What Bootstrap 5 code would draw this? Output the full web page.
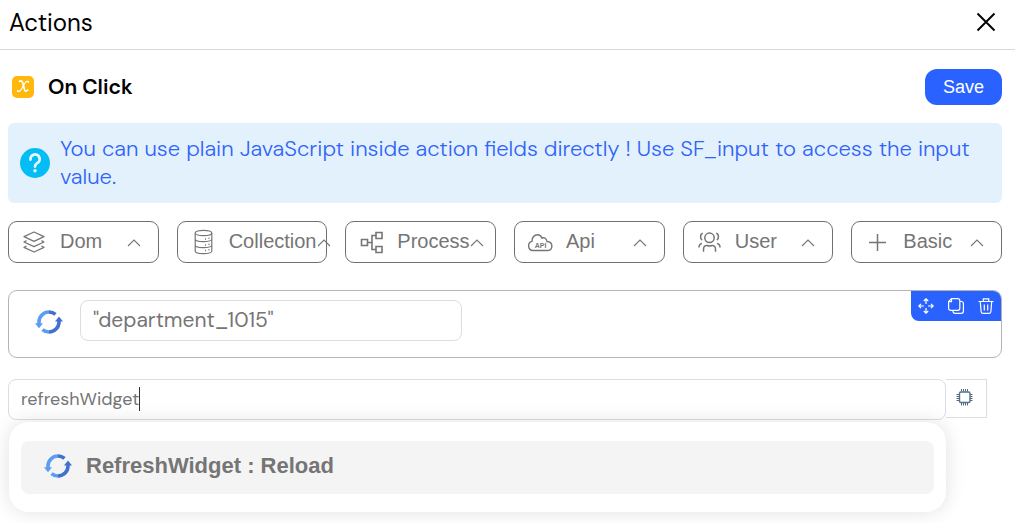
<!DOCTYPE html>
<html lang="en">
<head>
<meta charset="utf-8">
<meta name="viewport" content="width=device-width, initial-scale=1">
<title>Actions</title>
<link href="https://cdn.jsdelivr.net/npm/bootstrap@5.3.0/dist/css/bootstrap.min.css" rel="stylesheet">
<style>
  :root { --brand: #2962ff; --ink: #757575; --line: #dcdce6; }
  body { font-family: "DM Sans", Inter, "Liberation Sans", sans-serif; color: #000; background: #fff; }
  svg { display: block; flex: none; }
  .panel-head { height: 50px; padding: 0 16px 4px 9px; border-bottom: 1px solid #d9d9d9; }
  .panel-title { font-size: 24px; line-height: 28px; font-weight: 400; }
  .panel-main { padding: 19px 13px 0 8px; }
  .event-title { font-size: 21px; line-height: 28px; font-weight: 600; }
  .event-icon { margin: 0 14px 0 4px; }
  .btn-save { width: 77px; height: 36px; padding: 0; border: 0; border-radius: 12px; background: var(--brand); color: #fff; font: 18px/36px "Liberation Sans", sans-serif; }
  .tip { min-height: 80px; margin: 18px 0; padding: 12px; gap: 10px; border: 0; border-radius: 6px; background: #e3f1fd; color: #3064f8; font-size: 22px; font-weight: 300; line-height: 28px; }
  .picker-grid { gap: 18px; }
  .picker { flex: 1 1 0; min-width: 0; height: 42px; padding: 0 17px 0 13px; border: 1px solid #707070; border-radius: 9px; background: #fff; color: var(--ink); font: 20px/28px "Liberation Sans", sans-serif; text-align: left; }
  .picker-label { margin: 0 0 2px 14px; }
  .step { height: 68px; margin: 27px 0 21px; padding: 9px 26px; border: 1px solid #b4b4b4; border-radius: 9px; }
  .step-icon { margin: 10px 17px 0 0; }
  .field { height: 41px; padding: 0 12px 2px; border: 1px solid var(--line); border-radius: 8px; background: #fff; color: var(--ink); }
  .field:focus { color: var(--ink); box-shadow: none; border-color: var(--line); }
  .field-arg { width: 382px; font-size: 21px; }
  .field-search { font-size: 18px; }
  .step-tools { position: absolute; top: 0; right: 0; background: var(--brand); border-radius: 0 8px 0 8px; }
  .tool { width: 30px; height: 30px; padding: 7px; border: 0; background: none; color: #fff; }
  .caret { position: absolute; top: 8px; left: 131px; width: 1px; height: 24px; background: #333; }
  .search-row { padding-right: 15px; }
  .chip-btn { width: 41px; height: 39px; padding: 0 4px 2px 0; border: 1px solid var(--line); border-left: 0; background: #fff; }
  .suggest { margin: 2px 0 11px 1px; padding: 19px 12px 18px; border-radius: 20px; background: #fff; box-shadow: 0 0 20px rgba(0,0,0,.12); list-style: none; }
  .suggest-item { height: 53px; padding: 0 23px 4px; gap: 14px; border: 0; border-radius: 8px; background: #f4f4f4; color: var(--ink); font: bold 22px/28px "Liberation Sans", sans-serif; }
</style>
</head>
<body class="min-vh-100">
<svg width="0" height="0" class="position-absolute" aria-hidden="true">
  <symbol id="reload" viewBox="0 0 28 24">
    <g fill="none" stroke-width="3.600">
      <path d="M14 2A10 10 0 0 0 4 12v2" stroke="#5b9df0"/>
      <path d="M14 22a10 10 0 0 1-6.500-2.400" stroke="#5b9df0"/>
      <path d="M14 2a10 10 0 0 1 6.500 2.400M14 22a10 10 0 0 0 10-10v-2" stroke="#4270d0"/>
    </g>
    <path d="M0 13.200l8 0-4 5z" fill="#5b9df0"/><path d="M20 11.500h8l-4-5z" fill="#4270d0"/>
  </symbol>
  <symbol id="chevron" viewBox="0 0 14 24"><path d="M1 16 7 10l6 6" fill="none" stroke="#757575" stroke-width="1.100"/></symbol>
</svg>

<header class="panel-head d-flex align-items-center justify-content-between">
  <h1 class="panel-title m-0">Actions</h1>
  <button type="button" class="btn p-0 border-0" aria-label="Close">
    <svg width="26" height="26" viewBox="0 0 26 26" fill="none" stroke="#000" stroke-width="1.900"><path d="m4.500 3.500 17 17M21.500 3.500l-17 17"/></svg>
  </button>
</header>

<main class="panel-main">
  <div class="d-flex align-items-center justify-content-between">
    <div class="d-flex align-items-center">
      <svg class="event-icon" width="22" height="22" viewBox="0 0 22 22"><rect width="22" height="22" rx="5" fill="#ffb80b"/><path d="M7.500 5.300c2-.8 2.800-.2 3.300 1.700l1.700 6.500c.5 2 1.600 2.300 3.300.5" fill="none" stroke="#fff" stroke-width="1.700" stroke-linecap="round"/><path d="M16.300 5.600c-1.400-.9-2.500 0-3.900 2.400l-3.200 5.500c-1.200 2-2.300 2.500-3.500 1.800" fill="none" stroke="#fff" stroke-width="1.200" stroke-linecap="round"/><circle cx="16.300" cy="6" r=".9" fill="#fff"/><circle cx="5.800" cy="15" r=".9" fill="#fff"/></svg>
      <h2 class="event-title m-0">On Click</h2>
    </div>
    <button type="button" class="btn btn-save">Save</button>
  </div>

  <div class="alert tip d-flex align-items-center" role="note">
    <svg width="30" height="30" viewBox="0 0 30 30"><circle cx="15" cy="15" r="15" fill="#04bdf5"/><path d="M10.500 11.500a4.600 4.600 0 1 1 6.700 3.600C15.600 16 15 16.700 15 18.500" fill="none" stroke="#e8f7fe" stroke-width="2.800" stroke-linecap="round"/><circle cx="15" cy="22.700" r="1.700" fill="#e8f7fe"/></svg>
    <div>You can use plain JavaScript inside action fields directly ! Use SF_input to access the input value.</div>
  </div>

  <div class="picker-grid d-flex">
    <button type="button" class="picker d-flex align-items-center">
      <svg width="24" height="24" viewBox="0 0 24 24" fill="none" stroke="#757575" stroke-width="1.300" stroke-linejoin="round"><path d="m12 2 10 4.700-10 4.700L2 6.700zM4.500 10.700 2 12l10 4.700L22 12l-2.500-1.300M4.500 16 2 17.300 12 22l10-4.700-2.500-1.300"/></svg>
      <span class="picker-label">Dom</span><svg class="ms-auto" width="14" height="24"><use href="#chevron"/></svg>
    </button>
    <button type="button" class="picker d-flex align-items-center">
      <svg width="24" height="26" viewBox="0 0 24 26" fill="none" stroke="#757575" stroke-width="1.200"><ellipse cx="12.500" cy="4" rx="8.300" ry="2.600"/><path d="M4.200 4v18c0 3.600 16.600 3.600 16.600 0V4M4.200 10c0 3.600 16.600 3.600 16.600 0M4.200 16c0 3.600 16.600 3.600 16.600 0"/><path d="M14 10h1M17.500 9.200h1M14 16h1M17.500 15.200h1M14 21.600h1M17.500 20.800h1" stroke-width="1.500"/></svg>
      <span class="picker-label">Collection</span><svg class="ms-auto" width="14" height="24"><use href="#chevron"/></svg>
    </button>
    <button type="button" class="picker d-flex align-items-center">
      <svg width="24" height="24" viewBox="0 0 24 24" fill="none" stroke="#757575" stroke-width="1.600"><path d="M2.500 9.500h6v6h-6zM17 2.500h6v6h-6zM17 16.500h6v6h-6zM8.500 12.500H13M17 5.500h-4v14h4"/></svg>
      <span class="picker-label">Process</span><svg class="ms-auto" width="14" height="24"><use href="#chevron"/></svg>
    </button>
    <button type="button" class="picker d-flex align-items-center">
      <svg width="24" height="24" viewBox="0 0 24 24" overflow="visible"><path d="M5 20.500a4.700 4.700 0 0 1-1-9.200C4 4.500 11.500 2.500 14 8c2.500-1 4.500.5 5 3.500 6.500.5 6.500 9 0 9z" fill="none" stroke="#757575" stroke-width="1.400"/><text x="12.500" y="17.500" font-family="Liberation Sans, sans-serif" font-size="7" font-weight="bold" fill="#757575" text-anchor="middle">API</text></svg>
      <span class="picker-label">Api</span><svg class="ms-auto" width="14" height="24"><use href="#chevron"/></svg>
    </button>
    <button type="button" class="picker d-flex align-items-center">
      <svg width="24" height="24" viewBox="0 0 24 24" fill="none" stroke="#757575" stroke-width="1.500"><circle cx="12.500" cy="7.800" r="4.700"/><path d="M6.500 21.800v-2.300c0-3 1.500-4.400 3.700-4 1.500.6 3.100.6 4.600 0 2.200-.4 3.700 1 3.700 4v2.300M5.800 3.300C3 4 2.800 9 5.200 10.200M19.200 3.300c2.800.7 3 5.700.6 6.900M5 13.500c-2.300.3-3 1.500-3 4M20 13.500c2.300.3 3 1.500 3 4"/></svg>
      <span class="picker-label">User</span><svg class="ms-auto" width="14" height="24"><use href="#chevron"/></svg>
    </button>
    <button type="button" class="picker d-flex align-items-center">
      <svg width="24" height="24" viewBox="0 0 24 24" fill="none" stroke="#757575" stroke-width="1.500"><path d="M12.500 4v17M4 12.500h17"/></svg>
      <span class="picker-label">Basic</span><svg class="ms-auto" width="14" height="24"><use href="#chevron"/></svg>
    </button>
  </div>

  <section class="step position-relative d-flex align-items-start">
    <svg class="step-icon" width="28" height="24"><use href="#reload"/></svg>
    <input type="text" class="form-control field field-arg" aria-label="Widget name" value='"department_1015"'>
    <div class="step-tools d-flex">
      <button type="button" class="tool" aria-label="Move"><svg width="16" height="16" viewBox="0 0 16 16" fill="none" stroke="#fff" stroke-width="1.200"><path d="M8 6V.8M5.800 3 8 .8 10.200 3M8 10v5.200M5.800 13 8 15.200l2.200-2.200M6 8H.8M3 5.800.8 8 3 10.200M10 8h5.200M13 5.800 15.200 8 13 10.200"/></svg></button>
      <button type="button" class="tool" aria-label="Duplicate"><svg width="16" height="16" viewBox="0 0 16 16" fill="none" stroke="#fff" stroke-width="1.200"><path d="M3.500.7h6.300a2 2 0 0 1 2 2v7.600a2 2 0 0 1-2 2H2.600a2 2 0 0 1-2-2V3.600zM3.500.7v2.900H.6M12 3.500h1.400a2 2 0 0 1 2 2v7.800a2 2 0 0 1-2 2H7a2 2 0 0 1-2-2v-1"/></svg></button>
      <button type="button" class="tool" aria-label="Delete"><svg width="16" height="16" viewBox="0 0 16 16" fill="none" stroke="#fff" stroke-width="1.200"><path d="M.5 3.500h15M5.300 3.500V.8h5.400v2.700M2.300 3.500l.8 10.300c.1 1 .7 1.600 1.600 1.600h6.600c.9 0 1.500-.6 1.600-1.600l.8-10.300M6.300 6.500v6M9.700 6.500v6"/></svg></button>
    </div>
  </section>

  <div class="search-row d-flex align-items-start">
    <div class="position-relative flex-grow-1">
      <input type="text" class="form-control field field-search" aria-label="Action" value="refreshWidget">
      <span class="caret"></span>
      <ul class="suggest">
        <li class="suggest-item d-flex align-items-center"><svg width="28" height="24"><use href="#reload"/></svg>RefreshWidget : Reload</li>
      </ul>
    </div>
    <button type="button" class="chip-btn d-flex align-items-center justify-content-center" aria-label="Variables">
      <svg width="17" height="17" viewBox="0 0 17 17" fill="none" stroke="#62676e" stroke-width="1"><path d="M5.500 0v2.500M7.500 0v2.500M9.500 0v2.500M11.500 0v2.500M5.500 14v2.500M7.500 14v2.500M9.500 14v2.500M11.500 14v2.500M.5 5.500H3M.5 7.500H3M.5 9.500H3M.5 11.500H3M14 5.500h2.500M14 7.500h2.500M14 9.500h2.500M14 11.500h2.500"/><rect x="3.500" y="3" width="10.500" height="10.500" rx="1.500" stroke="#4c7199" stroke-width="1.400"/></svg>
    </button>
  </div>
</main>
<script src="https://cdn.jsdelivr.net/npm/bootstrap@5.3.0/dist/js/bootstrap.bundle.min.js"></script>
</body>
</html>
